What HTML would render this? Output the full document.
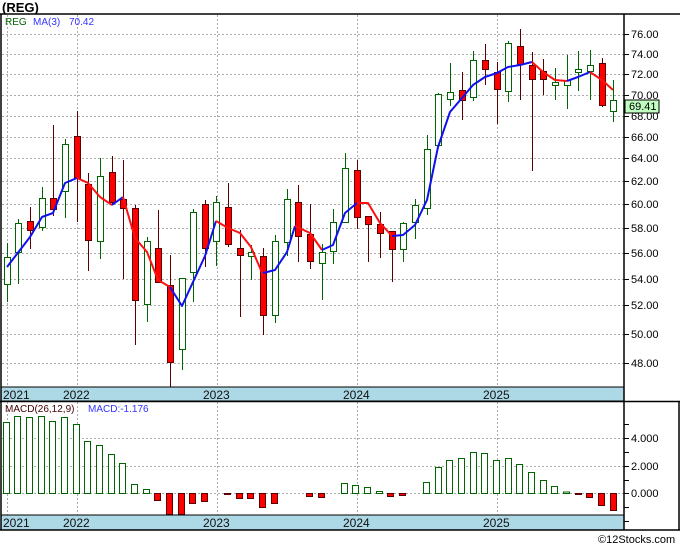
<!DOCTYPE html><html><head><style>body{margin:0;background:#fff;width:680px;height:546px;overflow:hidden}svg{display:block;font-family:"Liberation Sans",sans-serif}</style></head><body>
<svg width="680" height="546" xmlns="http://www.w3.org/2000/svg">
<text x="2" y="12" font-size="13" font-weight="bold" fill="#000">(REG)</text>
<g stroke="#aaa" stroke-dasharray="2,2" stroke-width="1">
<line x1="2" x2="624" y1="34.5" y2="34.5"/><line x1="2" x2="624" y1="54.5" y2="54.5"/><line x1="2" x2="624" y1="74.5" y2="74.5"/><line x1="2" x2="624" y1="95.5" y2="95.5"/><line x1="2" x2="624" y1="116.5" y2="116.5"/><line x1="2" x2="624" y1="137.5" y2="137.5"/><line x1="2" x2="624" y1="158.5" y2="158.5"/><line x1="2" x2="624" y1="181.5" y2="181.5"/><line x1="2" x2="624" y1="204.5" y2="204.5"/><line x1="2" x2="624" y1="228.5" y2="228.5"/><line x1="2" x2="624" y1="253.5" y2="253.5"/><line x1="2" x2="624" y1="279.5" y2="279.5"/><line x1="2" x2="624" y1="305.5" y2="305.5"/><line x1="2" x2="624" y1="334.5" y2="334.5"/><line x1="2" x2="624" y1="363.5" y2="363.5"/>
<line x1="7.5" x2="7.5" y1="15" y2="387"/><line x1="77.5" x2="77.5" y1="15" y2="387"/><line x1="217.5" x2="217.5" y1="15" y2="387"/><line x1="357.5" x2="357.5" y1="15" y2="387"/><line x1="497.5" x2="497.5" y1="15" y2="387"/>
<line x1="2" x2="624" y1="438.5" y2="438.5"/><line x1="2" x2="624" y1="466.5" y2="466.5"/><line x1="2" x2="624" y1="493.5" y2="493.5"/>
<line x1="7.5" x2="7.5" y1="402" y2="515"/><line x1="77.5" x2="77.5" y1="402" y2="515"/><line x1="217.5" x2="217.5" y1="402" y2="515"/><line x1="357.5" x2="357.5" y1="402" y2="515"/><line x1="497.5" x2="497.5" y1="402" y2="515"/>
</g>
<text x="5" y="25" font-size="10" fill="#006400">REG</text><text x="33" y="25" font-size="10" fill="#3333ff">MA(3)</text><text x="69" y="25" font-size="10" fill="#3333ff">70.42</text>
<g stroke-width="1">
<!-- candles: x, bodyTop, bodyBot, wickTop, wickBot, color -->
<g stroke="#006400" fill="#fff">
<line x1="7.5" x2="7.5" y1="243" y2="302"/><rect x="4.5" y="257.5" width="6" height="27"/>
<line x1="18.5" x2="18.5" y1="219" y2="284"/><rect x="15.5" y="223.5" width="6" height="29"/>
<line x1="42.5" x2="42.5" y1="187" y2="231"/><rect x="39.5" y="198.5" width="6" height="29"/>
<line x1="65.5" x2="65.5" y1="139" y2="218"/><rect x="62.5" y="144.5" width="6" height="47"/>
<line x1="100.5" x2="100.5" y1="158" y2="259"/><rect x="97.5" y="176.5" width="6" height="65"/>
<line x1="147.5" x2="147.5" y1="237" y2="322"/><rect x="144.5" y="241.5" width="6" height="63"/>
<line x1="182.5" x2="182.5" y1="278" y2="370"/><rect x="179.5" y="278.5" width="6" height="71"/>
<line x1="193.5" x2="193.5" y1="209" y2="302"/><rect x="190.5" y="212.5" width="6" height="60"/>
<line x1="216.5" x2="216.5" y1="196" y2="266"/><rect x="213.5" y="202.5" width="6" height="39"/>
<line x1="251.5" x2="251.5" y1="245" y2="280"/><rect x="248.5" y="252.5" width="6" height="4"/>
<line x1="275.5" x2="275.5" y1="235" y2="323"/><rect x="272.5" y="241.5" width="6" height="74"/>
<line x1="287.5" x2="287.5" y1="189" y2="256"/><rect x="284.5" y="199.5" width="6" height="43"/>
<line x1="322.5" x2="322.5" y1="244" y2="300"/><rect x="319.5" y="252.5" width="6" height="11"/>
<line x1="333.5" x2="333.5" y1="209" y2="264"/><rect x="330.5" y="222.5" width="6" height="29"/>
<line x1="345.5" x2="345.5" y1="153" y2="222"/><rect x="342.5" y="168.5" width="6" height="54"/>
<line x1="403.5" x2="403.5" y1="222" y2="262"/><rect x="400.5" y="223.5" width="6" height="26"/>
<line x1="415.5" x2="415.5" y1="199" y2="239"/><rect x="412.5" y="205.5" width="6" height="17"/>
<line x1="427.5" x2="427.5" y1="135" y2="215"/><rect x="424.5" y="149.5" width="6" height="59"/>
<line x1="438.5" x2="438.5" y1="93" y2="145"/><rect x="435.5" y="94.5" width="6" height="51"/>
<line x1="450.5" x2="450.5" y1="63" y2="106"/><rect x="447.5" y="92.5" width="6" height="7"/>
<line x1="473.5" x2="473.5" y1="51" y2="101"/><rect x="470.5" y="60.5" width="6" height="37"/>
<line x1="508.5" x2="508.5" y1="41" y2="102"/><rect x="505.5" y="43.5" width="6" height="48"/>
<line x1="555.5" x2="555.5" y1="68" y2="100"/><rect x="552.5" y="82.5" width="6" height="3"/>
<line x1="567.5" x2="567.5" y1="55" y2="109"/><rect x="564.5" y="80.5" width="6" height="5"/>
<line x1="578.5" x2="578.5" y1="51" y2="91"/><rect x="575.5" y="69.5" width="6" height="3"/>
<line x1="590.5" x2="590.5" y1="50" y2="100"/><rect x="587.5" y="65.5" width="6" height="6"/>
<line x1="613.5" x2="613.5" y1="80" y2="122"/><rect x="610.5" y="100.5" width="6" height="11"/>
</g>
<g stroke="#5a0000" fill="#ff0000">
<line x1="30.5" x2="30.5" y1="207" y2="249"/><rect x="27.5" y="221.5" width="6" height="9"/>
<line x1="53.5" x2="53.5" y1="125" y2="216"/><rect x="50.5" y="198.5" width="6" height="11"/>
<line x1="77.5" x2="77.5" y1="111" y2="222"/><rect x="74.5" y="136.5" width="6" height="42"/>
<line x1="88.5" x2="88.5" y1="173" y2="271"/><rect x="85.5" y="184.5" width="6" height="56"/>
<line x1="112.5" x2="112.5" y1="156" y2="205"/><rect x="109.5" y="172.5" width="6" height="30"/>
<line x1="123.5" x2="123.5" y1="160" y2="279"/><rect x="120.5" y="199.5" width="6" height="9"/>
<line x1="135.5" x2="135.5" y1="205" y2="345"/><rect x="132.5" y="208.5" width="6" height="92"/>
<line x1="158.5" x2="158.5" y1="210" y2="282"/><rect x="155.5" y="248.5" width="6" height="34"/>
<line x1="170.5" x2="170.5" y1="255" y2="387"/><rect x="167.5" y="285.5" width="6" height="77"/>
<line x1="205.5" x2="205.5" y1="200" y2="267"/><rect x="202.5" y="204.5" width="6" height="44"/>
<line x1="228.5" x2="228.5" y1="183" y2="247"/><rect x="225.5" y="207.5" width="6" height="37"/>
<line x1="240.5" x2="240.5" y1="230" y2="317"/><rect x="237.5" y="248.5" width="6" height="7"/>
<line x1="263.5" x2="263.5" y1="248" y2="335"/><rect x="260.5" y="256.5" width="6" height="59"/>
<line x1="298.5" x2="298.5" y1="185" y2="262"/><rect x="295.5" y="202.5" width="6" height="34"/>
<line x1="310.5" x2="310.5" y1="204" y2="269"/><rect x="307.5" y="234.5" width="6" height="27"/>
<line x1="357.5" x2="357.5" y1="160" y2="229"/><rect x="354.5" y="170.5" width="6" height="47"/>
<line x1="368.5" x2="368.5" y1="216" y2="262"/><rect x="365.5" y="216.5" width="6" height="8"/>
<line x1="380.5" x2="380.5" y1="212" y2="258"/><rect x="377.5" y="224.5" width="6" height="9"/>
<line x1="392.5" x2="392.5" y1="231" y2="282"/><rect x="389.5" y="231.5" width="6" height="18"/>
<line x1="462.5" x2="462.5" y1="72" y2="120"/><rect x="459.5" y="90.5" width="6" height="10"/>
<line x1="485.5" x2="485.5" y1="44" y2="85"/><rect x="482.5" y="60.5" width="6" height="9"/>
<line x1="497.5" x2="497.5" y1="62" y2="124"/><rect x="494.5" y="72.5" width="6" height="17"/>
<line x1="520.5" x2="520.5" y1="29" y2="100"/><rect x="517.5" y="46.5" width="6" height="18"/>
<line x1="532.5" x2="532.5" y1="52" y2="171"/><rect x="529.5" y="65.5" width="6" height="14"/>
<line x1="543.5" x2="543.5" y1="59" y2="95"/><rect x="540.5" y="71.5" width="6" height="8"/>
<line x1="602.5" x2="602.5" y1="58" y2="107"/><rect x="599.5" y="63.5" width="6" height="42"/>
</g>
</g>
<g fill="none" stroke-width="2" stroke-linejoin="round">
<polyline stroke="#1010ee" points="7,267 30,237 42,217 53,213 65,183 77,178"/>
<polyline stroke="#ff1010" points="77,178 88,183 100,197 112,205"/>
<polyline stroke="#1010ee" points="112,205 123,197"/>
<polyline stroke="#ff1010" points="123,197 135,238 147,252 158,280 170,287"/>
<polyline stroke="#1010ee" points="170,287 182,306 193,282 205,256 216,221"/>
<polyline stroke="#ff1010" points="216,221 228,228 240,233 251,247 263,275"/>
<polyline stroke="#1010ee" points="263,273 275,270 287,252 295,226"/>
<polyline stroke="#ff1010" points="295,226 310,233 322,250"/>
<polyline stroke="#1010ee" points="322,250 333,245 345,213 357,203"/>
<polyline stroke="#ff1010" points="357,203 368,203 380,223 392,236"/>
<polyline stroke="#1010ee" points="392,236 403,235 415,225 427,200 438,147 450,112 462,98 473,85 485,77 497,73 508,67 520,65 532,62"/>
<polyline stroke="#ff1010" points="532,62 543,72 555,80 567,81"/>
<polyline stroke="#1010ee" points="567,81 578,77 590,72"/>
<polyline stroke="#ff1010" points="590,72 602,80 613,90"/>
</g>
<!-- MACD -->
<text x="5" y="412" font-size="10" fill="#400">MACD(26,12,9)</text><text x="88" y="412" font-size="10" fill="#3333ff">MACD:-1.176</text>
<g stroke="#006400" fill="#fff">
<rect x="3.5" y="422.5" width="6" height="71"/><rect x="14.5" y="416.5" width="6" height="77"/><rect x="26.5" y="417.5" width="6" height="76"/><rect x="38.5" y="416.5" width="6" height="77"/><rect x="49.5" y="421.5" width="6" height="72"/><rect x="61.5" y="417.5" width="6" height="76"/><rect x="73.5" y="424.5" width="6" height="69"/><rect x="84.5" y="441.5" width="6" height="52"/><rect x="96.5" y="445.5" width="6" height="48"/><rect x="108.5" y="454.5" width="6" height="39"/><rect x="119.5" y="463.5" width="6" height="30"/><rect x="131.5" y="484.5" width="6" height="9"/><rect x="143.5" y="489.5" width="6" height="4"/>
<rect x="341.5" y="483.5" width="6" height="10"/><rect x="352.5" y="485.5" width="6" height="8"/><rect x="364.5" y="487.5" width="6" height="6"/><rect x="376.5" y="491.5" width="6" height="2"/>
<rect x="423.5" y="482.5" width="6" height="11"/><rect x="435.5" y="467.5" width="6" height="26"/><rect x="446.5" y="460.5" width="6" height="33"/><rect x="458.5" y="458.5" width="6" height="35"/><rect x="470.5" y="452.5" width="6" height="41"/><rect x="481.5" y="453.5" width="6" height="40"/><rect x="493.5" y="460.5" width="6" height="33"/><rect x="505.5" y="458.5" width="6" height="35"/><rect x="516.5" y="464.5" width="6" height="29"/><rect x="528.5" y="472.5" width="6" height="21"/><rect x="540.5" y="480.5" width="6" height="13"/><rect x="551.5" y="486.5" width="6" height="7"/><rect x="563.5" y="492" width="6" height="1.5"/>
</g>
<g stroke="#5a0000" fill="#ff0000">
<rect x="154.5" y="493.5" width="6" height="7"/><rect x="166.5" y="493.5" width="6" height="21"/><rect x="178.5" y="493.5" width="6" height="21"/><rect x="189.5" y="493.5" width="6" height="10"/><rect x="201.5" y="493.5" width="6" height="8"/>
<rect x="224.5" y="493.5" width="6" height="1"/><rect x="236.5" y="493.5" width="6" height="5"/><rect x="247.5" y="493.5" width="6" height="5"/><rect x="259.5" y="493.5" width="6" height="14"/><rect x="271.5" y="493.5" width="6" height="10"/>
<rect x="306.5" y="493.5" width="6" height="3"/><rect x="318.5" y="493.5" width="6" height="4"/>
<rect x="387.5" y="493.5" width="6" height="3"/><rect x="399.5" y="493.5" width="6" height="2"/>
<rect x="575.5" y="493.5" width="6" height="1"/><rect x="586.5" y="493.5" width="6" height="4"/><rect x="598.5" y="493.5" width="6" height="12"/><rect x="610.5" y="493.5" width="6" height="17"/>
</g>
<!-- date bars -->
<rect x="1" y="387" width="623" height="14" fill="#add8e6" stroke="#000"/>
<rect x="1" y="515" width="623" height="15" fill="#add8e6" stroke="#000"/>
<g font-size="12" fill="#111"><text x="3" y="399">2021</text><text x="63" y="399">2022</text><text x="203" y="399">2023</text><text x="343" y="399">2024</text><text x="483" y="399">2025</text>
<text x="3" y="527">2021</text><text x="63" y="527">2022</text><text x="203" y="527">2023</text><text x="343" y="527">2024</text><text x="483" y="527">2025</text></g>
<!-- frames -->
<g stroke="#000" fill="none" stroke-width="1.5"><line x1="0" x2="680" y1="14" y2="14"/><line x1="1" x2="1" y1="14" y2="530"/><line x1="624" x2="624" y1="14" y2="530"/><line x1="679" x2="679" y1="401" y2="530"/><line x1="0" x2="680" y1="401.5" y2="401.5"/><line x1="0" x2="680" y1="530" y2="530"/></g>
<g stroke="#000"><line x1="624" x2="629" y1="34.5" y2="34.5"/><line x1="624" x2="629" y1="54.5" y2="54.5"/><line x1="624" x2="629" y1="74.5" y2="74.5"/><line x1="624" x2="629" y1="95.5" y2="95.5"/><line x1="624" x2="629" y1="116.5" y2="116.5"/><line x1="624" x2="629" y1="137.5" y2="137.5"/><line x1="624" x2="629" y1="158.5" y2="158.5"/><line x1="624" x2="629" y1="181.5" y2="181.5"/><line x1="624" x2="629" y1="204.5" y2="204.5"/><line x1="624" x2="629" y1="228.5" y2="228.5"/><line x1="624" x2="629" y1="253.5" y2="253.5"/><line x1="624" x2="629" y1="279.5" y2="279.5"/><line x1="624" x2="629" y1="305.5" y2="305.5"/><line x1="624" x2="629" y1="334.5" y2="334.5"/><line x1="624" x2="629" y1="363.5" y2="363.5"/>
<line x1="624" x2="629" y1="424.5" y2="424.5"/><line x1="624" x2="629" y1="438.5" y2="438.5"/><line x1="624" x2="629" y1="452.5" y2="452.5"/><line x1="624" x2="629" y1="466.5" y2="466.5"/><line x1="624" x2="629" y1="480.5" y2="480.5"/><line x1="624" x2="629" y1="493.5" y2="493.5"/><line x1="624" x2="629" y1="507.5" y2="507.5"/><line x1="624" x2="629" y1="521.5" y2="521.5"/></g>
<g font-size="11" fill="#000"><text x="631" y="38">76.00</text><text x="631" y="58">74.00</text><text x="631" y="78">72.00</text><text x="631" y="99">70.00</text><text x="631" y="120">68.00</text><text x="631" y="141">66.00</text><text x="631" y="162">64.00</text><text x="631" y="185">62.00</text><text x="631" y="208">60.00</text><text x="631" y="232">58.00</text><text x="631" y="257">56.00</text><text x="631" y="283">54.00</text><text x="631" y="309">52.00</text><text x="631" y="338">50.00</text><text x="631" y="367">48.00</text>
<text x="631" y="442">4.000</text><text x="631" y="470">2.000</text><text x="631" y="497">0.000</text></g>
<rect x="625" y="100" width="34" height="13" fill="#c0ffc0" stroke="#000"/><text x="629" y="110" font-size="11">69.41</text>
<text x="598" y="543" font-size="11" fill="#000">©12Stocks.com</text>
</svg></body></html>
